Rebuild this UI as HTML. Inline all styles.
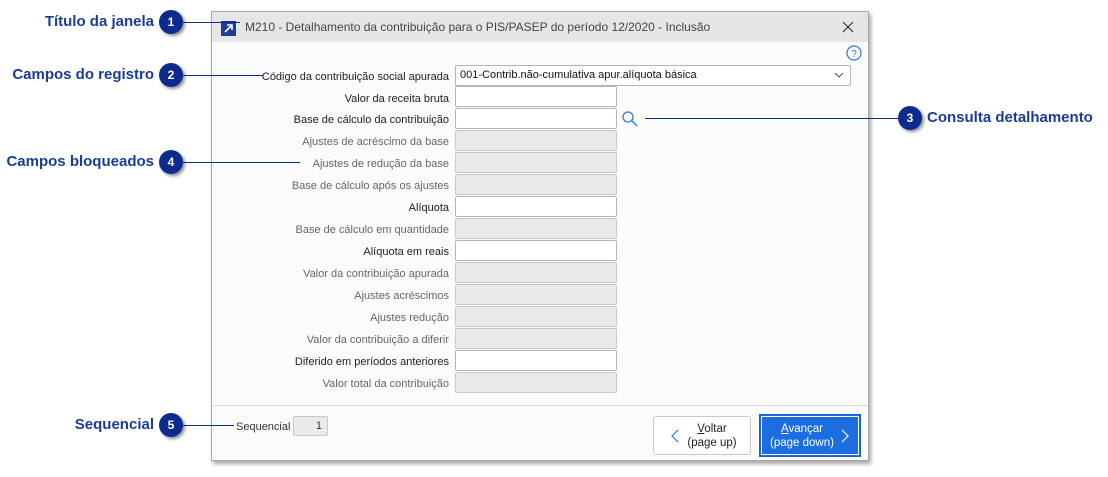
<!DOCTYPE html>
<html><head><meta charset="utf-8"><style>
*{margin:0;padding:0;box-sizing:border-box}
body{width:1108px;height:477px;background:#fff;position:relative;overflow:hidden;font-family:"Liberation Sans",sans-serif}
.win{position:absolute;left:211px;top:11px;width:658px;height:450px;background:#fbfbfb;border:1px solid #a8a8a8;box-shadow:2px 3px 4px rgba(0,0,0,.35)}
.title{position:absolute;left:0;top:0;width:656px;height:30px;background:#e6e6e6}
.title span{position:absolute;left:33px;top:8px;font-size:12px;color:#444}
.lbl{position:absolute;right:659px;font-size:11px;white-space:nowrap;text-align:right;margin-top:2px}
.f{position:absolute;left:455px;width:162px;height:21px;border:1px solid #b5b5b5;border-radius:2px;background:#fff}
.f.d{background:#eaeaea;border-color:#c8c8c8}
.ann{position:absolute;font-weight:bold;color:#1b3c96;font-size:15px;white-space:nowrap}
.b{position:absolute;width:24px;height:24px;border-radius:50%;background:#0c2b8c;color:#fff;font-weight:bold;font-size:12px;text-align:center;line-height:24px;box-shadow:2px 2px 3px rgba(0,0,0,.45)}
.ln{position:absolute;height:1px;background:#0c2b8c}
</style></head><body>
<div class="win">
<div class="title"><div style="position:absolute;left:9px;top:9px;width:15px;height:15px;background:#1c3f94"><svg width="15" height="15"><path d="M4 11L11 4M6 4h5v5" stroke="#fff" stroke-width="1.6" fill="none"/></svg></div><span>M210 - Detalhamento da contribuição para o PIS/PASEP do período 12/2020 - Inclusão</span>
<svg style="position:absolute;left:630px;top:9px" width="12" height="12"><path d="M1 1L11 11M11 1L1 11" stroke="#333" stroke-width="1.2"/></svg></div>
<svg style="position:absolute;left:634px;top:33px" width="16" height="16"><circle cx="8" cy="8" r="7" fill="none" stroke="#2d7be0" stroke-width="1.2"/><text x="8" y="12" font-size="10" text-anchor="middle" fill="#2d7be0" font-family="Liberation Sans">?</text></svg>
<div style="position:absolute;left:0;top:393px;width:656px;height:1px;background:#dcdcdc"></div>
</div>
<div class="f" style="top:65px;width:396px;height:21px;font-size:11px;padding:3px 4px;color:#111">001-Contrib.não-cumulativa apur.alíquota básica<svg style="position:absolute;right:6px;top:6px" width="10" height="6"><path d="M1 1l4 4 4-4" stroke="#555" fill="none"/></svg></div>
<div class="lbl" style="top:69px;color:#222">Código da contribuição social apurada</div>
<div class="lbl" style="top:91px;color:#222">Valor da receita bruta</div><div class="f" style="top:86px"></div>
<div class="lbl" style="top:112px;color:#222">Base de cálculo da contribuição</div><div class="f" style="top:108px"></div>
<div class="lbl" style="top:134px;color:#666">Ajustes de acréscimo da base</div><div class="f d" style="top:130px"></div>
<div class="lbl" style="top:156px;color:#666">Ajustes de redução da base</div><div class="f d" style="top:152px"></div>
<div class="lbl" style="top:178px;color:#666">Base de cálculo após os ajustes</div><div class="f d" style="top:174px"></div>
<div class="lbl" style="top:200px;color:#222">Alíquota</div><div class="f" style="top:196px"></div>
<div class="lbl" style="top:222px;color:#666">Base de cálculo em quantidade</div><div class="f d" style="top:218px"></div>
<div class="lbl" style="top:244px;color:#222">Alíquota em reais</div><div class="f" style="top:240px"></div>
<div class="lbl" style="top:266px;color:#666">Valor da contribuição apurada</div><div class="f d" style="top:262px"></div>
<div class="lbl" style="top:288px;color:#666">Ajustes acréscimos</div><div class="f d" style="top:284px"></div>
<div class="lbl" style="top:310px;color:#666">Ajustes redução</div><div class="f d" style="top:306px"></div>
<div class="lbl" style="top:332px;color:#666">Valor da contribuição a diferir</div><div class="f d" style="top:328px"></div>
<div class="lbl" style="top:354px;color:#222">Diferido em períodos anteriores</div><div class="f" style="top:350px"></div>
<div class="lbl" style="top:376px;color:#666">Valor total da contribuição</div><div class="f d" style="top:372px"></div>
<svg style="position:absolute;left:621px;top:110px" width="18" height="18"><circle cx="7" cy="7" r="5" fill="none" stroke="#2d7be0" stroke-width="1.3"/><path d="M11 11l5 5" stroke="#2d7be0" stroke-width="1.4"/></svg>
<div style="position:absolute;left:236px;top:421px;font-size:11px;color:#333">Sequencial</div>
<div class="f d" style="left:293px;top:416px;width:35px;height:20px;font-size:11px;text-align:right;padding:3px 5px;color:#333">1</div>
<div style="position:absolute;left:653px;top:416px;width:98px;height:39px;border:1px solid #c8c8c8;border-radius:3px;background:#fff;font-size:11.5px;color:#222;text-align:center;padding-top:5px;line-height:14px;padding-left:20px"><u>V</u>oltar<br>(page up)<svg style="position:absolute;left:17px;top:12px" width="8" height="14"><path d="M7 1L1 7l6 6" stroke="#2d7be0" fill="none" stroke-width="1.2"/></svg></div>
<div style="position:absolute;left:759px;top:414px;width:102px;height:43px;border:1px solid #1a5fc8;background:#1b6de0;outline:1px solid #fff;outline-offset:-3px;font-size:11.5px;color:#fff;text-align:center;padding-top:7px;line-height:14px;padding-right:16px"><u>A</u>vançar<br>(page down)<svg style="position:absolute;left:81px;top:14px" width="8" height="14"><path d="M1 1l6 6-6 6" stroke="#fff" fill="none" stroke-width="1.2"/></svg></div>

<div class="ann" style="right:954px;top:13px">Título da janela</div><div class="b" style="left:159px;top:10px">1</div><div class="ln" style="left:183px;top:22px;width:57px"></div>
<div class="ann" style="right:954px;top:66px">Campos do registro</div><div class="b" style="left:159px;top:63px">2</div><div class="ln" style="left:183px;top:75px;width:80px"></div>
<div class="ann" style="left:927px;top:109px">Consulta detalhamento</div><div class="b" style="left:898px;top:106px">3</div><div class="ln" style="left:645px;top:118px;width:254px"></div>
<div class="ann" style="right:954px;top:153px">Campos bloqueados</div><div class="b" style="left:159px;top:150px">4</div><div class="ln" style="left:183px;top:162px;width:117px"></div>
<div class="ann" style="right:954px;top:416px">Sequencial</div><div class="b" style="left:159px;top:413px">5</div><div class="ln" style="left:183px;top:425px;width:51px"></div>
</body></html>
